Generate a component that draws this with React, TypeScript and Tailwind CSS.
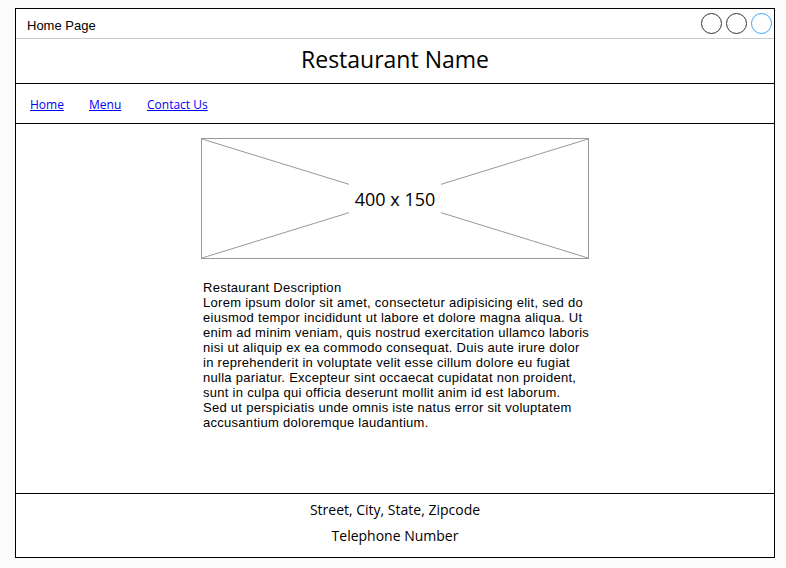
import React from "react";

const lines = [
  "Lorem ipsum dolor sit amet, consectetur adipisicing elit, sed do",
  "eiusmod tempor incididunt ut labore et dolore magna aliqua. Ut",
  "enim ad minim veniam, quis nostrud exercitation ullamco laboris",
  "nisi ut aliquip ex ea commodo consequat. Duis aute irure dolor",
  "in reprehenderit in voluptate velit esse cillum dolore eu fugiat",
  "nulla pariatur. Excepteur sint occaecat cupidatat non proident,",
  "sunt in culpa qui officia deserunt mollit anim id est laborum.",
  "Sed ut perspiciatis unde omnis iste natus error sit voluptatem",
  "accusantium doloremque laudantium.",
];

const sketch = "font-['Open_Sans',sans-serif]";

export default function App() {
  return (
    <div className="w-[786px] h-[568px] bg-[#fbfbfb] pt-[8px] pl-[15px]">
      <div className="w-[760px] h-[550px] border border-black bg-white flex flex-col">
        {/* window bar */}
        <div className="h-[30px] flex items-start justify-between border-b border-[#cccccc]">
          <p className="pl-[11px] pt-[9px] leading-[15px] text-[13px] text-black font-['Liberation_Sans',sans-serif]">
            Home Page
          </p>
          <div className="flex gap-[4px] pt-[4px] pr-[2px]">
            <div className="w-[21px] h-[21px] rounded-full border border-[#333333]"></div>
            <div className="w-[21px] h-[21px] rounded-full border border-[#333333]"></div>
            <div className="w-[21px] h-[21px] rounded-full border border-[#3fa3f5]"></div>
          </div>
        </div>

        {/* title */}
        <div className="h-[45px] flex items-center justify-center pb-[4px] border-b border-black">
          <h1 className={`${sketch} text-[23px] leading-[30px] text-black`}>Restaurant Name</h1>
        </div>

        {/* nav */}
        <div className={`${sketch} h-[40px] flex items-center pl-[14px] pt-[3px] border-b border-black text-[12px]`}>
          <div className="w-[59px]">
            <a href="#" className="text-[#0000ff] underline">Home</a>
          </div>
          <div className="w-[58px]">
            <a href="#" className="text-[#0000ff] underline">Menu</a>
          </div>
          <div>
            <a href="#" className="text-[#0000ff] underline">Contact Us</a>
          </div>
        </div>

        {/* content */}
        <div className={`${sketch} flex-1 flex flex-col items-center pt-[14px] border-b border-black`}>
          <div className="relative w-[388px] h-[121px] border border-[#999999] flex items-center justify-center">
            <svg className="absolute inset-0 w-full h-full" viewBox="0 0 386 119" preserveAspectRatio="none">
              <line x1="0" y1="0" x2="386" y2="119" stroke="#999999" strokeWidth="1" />
              <line x1="386" y1="0" x2="0" y2="119" stroke="#999999" strokeWidth="1" />
            </svg>
            <span className="relative bg-white px-[6px] leading-[30px] text-[18px] text-black">400 x 150</span>
          </div>
          <div className="w-[388px] pl-[2px] mt-[21px] text-[13px] leading-[15px] tracking-[0.28px] text-black font-['Liberation_Sans',sans-serif]">
            <p>Restaurant Description</p>
            {lines.map((l) => (
              <p key={l} className="whitespace-nowrap">{l}</p>
            ))}
          </div>
        </div>

        {/* footer */}
        <div className={`${sketch} h-[63px] flex flex-col items-center pt-[7px] gap-[9px] text-[14px] leading-[17px] text-black`}>
          <p>Street, City, State, Zipcode</p>
          <p>Telephone Number</p>
        </div>
      </div>
    </div>
  );
}
